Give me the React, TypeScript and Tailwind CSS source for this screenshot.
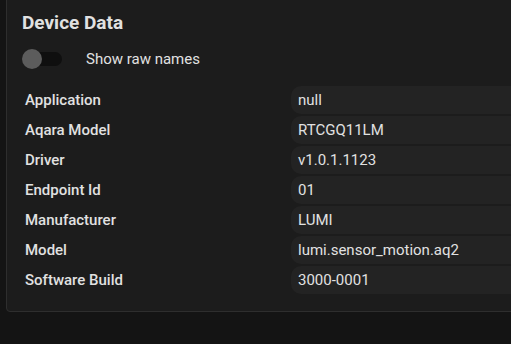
import React, { useState } from "react";

const rows: { label: string; value: string }[] = [
  { label: "Application", value: "null" },
  { label: "Aqara Model", value: "RTCGQ11LM" },
  { label: "Driver", value: "v1.0.1.1123" },
  { label: "Endpoint Id", value: "01" },
  { label: "Manufacturer", value: "LUMI" },
  { label: "Model", value: "lumi.sensor_motion.aq2" },
  { label: "Software Build", value: "3000-0001" },
];

const App: React.FC = () => {
  const [raw, setRaw] = useState(false);

  return (
    <div
      className="w-[511px] h-[344px] overflow-hidden bg-[#141414] text-[#e1e1e1]"
      style={{ fontFamily: "Roboto, 'Noto Sans', sans-serif" }}
    >
      <div className="ml-[6px] -mt-[8px] w-[600px] rounded border border-[#2e2e2e] bg-[#1c1c1c] pl-[15px] pt-[18px] pb-[17px]">
        <h2 className="h-6 text-[19px] leading-6 font-bold">Device Data</h2>

        <div className="mt-[14px] flex h-5 items-center">
          <button
            className="relative h-5 w-[42px]"
            onClick={() => setRaw(!raw)}
          >
            <span className="absolute left-[2px] top-[3px] h-[14px] w-[38px] rounded-full bg-[#0f0f0f]" />
            <span className="absolute left-0 top-0 h-5 w-5 rounded-full bg-[#5c5c5c]" />
          </button>
          <span className="ml-[22px] text-[15px]">Show raw names</span>
        </div>

        <div className="mt-[17px] flex flex-col gap-[2px]">
          {rows.map((row) => (
            <div key={row.label} className="grid h-7 grid-cols-[269px_1fr]">
              <div className="flex items-center pl-[3px] text-[15px] font-medium">
                {raw ? row.label.toLowerCase() : row.label}
              </div>
              <div className="flex items-center rounded-[10px] bg-[#232323] pl-[7px] text-[15px]">
                {row.value}
              </div>
            </div>
          ))}
        </div>
      </div>
    </div>
  );
};

export default App;
